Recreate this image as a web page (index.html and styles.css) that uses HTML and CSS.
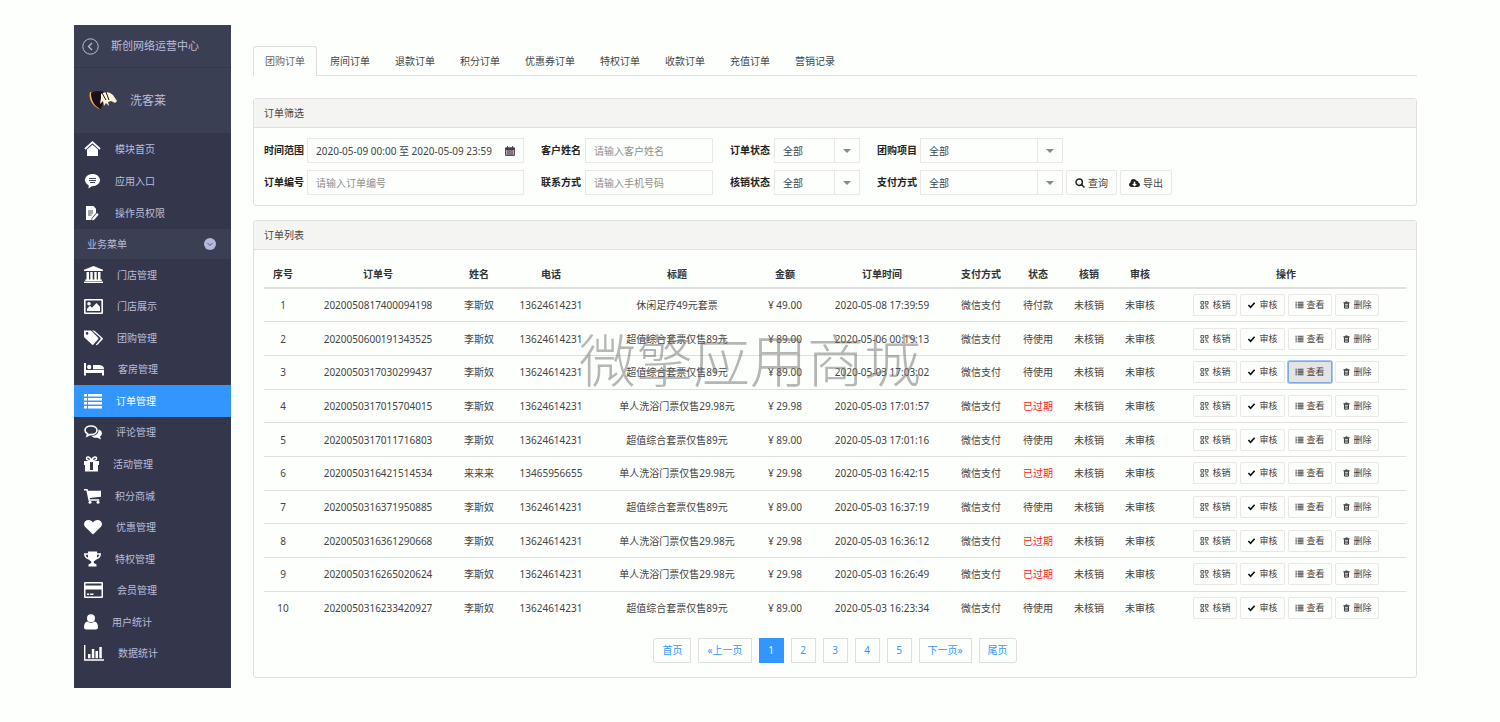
FILE: index.html
```html
<!DOCTYPE html>
<html lang="zh-CN">
<head>
<meta charset="utf-8">
<title>订单管理</title>
<link rel="stylesheet" href="styles.css">
</head>
<body>
<svg class="sprite" aria-hidden="true">
  <symbol id="i-qr" viewBox="0 0 9 9"><path d="M.5.5h3v3h-3zM5.5.5h3v3h-3zM.5 5.5h3v3h-3zM5 5.5h2v1.500h1.500M5.500 8.500h1M8 8.500h1" fill="none" stroke="currentColor"/></symbol>
  <symbol id="i-check" viewBox="0 0 9 9"><path d="M1 4.500 3.500 7 8 2" fill="none" stroke="#111" stroke-width="1.900"/></symbol>
  <symbol id="i-rows" viewBox="0 0 9 9"><path d="M0 1.500h1.500M0 3.500h1.500M0 5.500h1.500M0 7.500h1.500M2.500 1.500H9M2.500 3.500H9M2.500 5.500H9M2.500 7.500H9" stroke="currentColor" stroke-width="1.200"/></symbol>
  <symbol id="i-trash" viewBox="0 0 7 9"><path d="M1.200 2.500h4.600V8H1.200zM0 2h7M2.500 1h2M2.800 4v3M4.300 4v3" fill="none" stroke="#222" stroke-width="1"/></symbol>
</svg>
<div class="page">
  <aside class="side">
    <a class="side-head" href="#"><svg width="17" height="17" viewBox="0 0 17 17"><g fill="none" stroke="currentColor"><circle cx="8.500" cy="8.500" r="7.700"/><path d="M10 5 6.500 8.500 10 12" stroke-width="1.300"/></g></svg>斯创网络运营中心</a>
    <div class="brand"><svg width="29" height="19" viewBox="0 0 29 19"><path d="M1 1C-1 8 4 16 11 18 6 12 4 7 5 2z" fill="#f0b25c"/><path d="M2 2C5-.5 14 0 19 2l3 4-7 3-3 9C6 16 2 10 2 2z" fill="#1d1015"/><path d="M12 3c2-2 7-2 9-1l3 2 4 6-2 2-4-2-3 1 1 4-3-3-2 3-1-5-3 3 1-6z" fill="#fff3d5"/><path d="m13 2 4 7M17 1l3 8" stroke="#241418"/></svg>洗客莱</div>
    <nav class="menu top">
      <a href="#"><svg width="17" height="16" viewBox="0 0 17 16"><path d="M1 8 8.500 1.200 16 8" fill="none" stroke="#fff" stroke-width="1.700"/><path d="M3 8.500 8.500 3.800 14 8.500V15H3z"/></svg>模块首页</a>
      <a href="#"><svg width="17" height="16" viewBox="0 0 17 16"><path d="M8.500 1C4.400 1 1 3.700 1 7.100c0 2.300 1.500 4.200 3.700 5.200L4.500 15.500l3.300-2.300c4.600.2 8.200-2.600 8.200-6.100C16 3.700 12.600 1 8.500 1z"/><path d="M5 5.500h7M5 7.500h7M6 9.500h5" stroke="#44475e"/></svg>应用入口</a>
      <a href="#"><svg width="17" height="16" viewBox="0 0 17 16"><path d="M2 1h7.500L12 3.800V8l-4.500 5.200V15H2z"/><path d="M4 6h5M4 8h5M4 10h3.500" stroke="#44475e"/><path d="m13 8 1.700 1.400-4.500 5.300-2 .8.300-2.200z"/></svg>操作员权限</a>
    </nav>
    <div class="group">业务菜单<svg width="12" height="12" viewBox="0 0 12 12"><circle cx="6" cy="6" r="6" fill="#b4b8da"/><path d="m3.500 5 2.500 2.500L8.500 5" fill="none" stroke="#5a5e7c"/></svg></div>
    <nav class="menu main-menu">
      <a href="#"><svg width="19" height="17" viewBox="0 0 19 17"><path d="M9.500 0 19 3.800V5H0V3.800zM2.500 6H5v7.500h1.300V6h2.400v7.500h1.600V6h2.400v7.500H14V6h2.500v7.500h1.300V15H1.200v-1.500h1.300zM0 15.500h19V17H0z"/></svg>门店管理</a>
      <a href="#"><svg width="19" height="17" viewBox="0 0 19 17"><path fill-rule="evenodd" d="M1.200 1h16.600q1.200 0 1.200 1.200v12.600q0 1.200-1.200 1.200H1.200Q0 16 0 14.800V2.200Q0 1 1.200 1zm.4 1.500v12h15.800v-12z"/><circle cx="5" cy="5.700" r="1.800"/><path d="M3 13v-2.200l3-3 2 2L12.500 5l3.500 3.700V13z"/></svg>门店展示</a>
      <a href="#"><svg width="19" height="17" viewBox="0 0 19 17"><path fill-rule="evenodd" d="M0 1.500h6.200q1 0 1.600.7l6.300 6.600q.7.700 0 1.500L9.500 15.600q-.8.800-1.600 0L.7 8.800Q0 8 0 7.200zm3 1.600a1.300 1.300 0 1 0 .1 2.700A1.300 1.300 0 0 0 3 3.100z"/><path d="M8.200 1.500h1.300q.9 0 1.600.7l7.400 6.700q.8.700 0 1.500l-5 5.400q-.9.800-1.700 0l4.600-5.600q.6-.8 0-1.500z"/></svg>团购管理</a>
      <a href="#"><svg width="20" height="16" viewBox="0 0 20 16"><path d="M0 2h2v7h18v5.500h-2V12H2v2.500H0zM9 4h6.500Q20 4.500 20 8.300H9z"/><circle cx="5.200" cy="6" r="2.200"/></svg>客房管理</a>
      <a class="active" href="#"><svg width="18" height="16" viewBox="0 0 18 16"><path d="M0 1h3v2.500H0zM0 5h3v2.500H0zM0 9h3v2.500H0zM0 13h3v2.500H0zM4 1h14v2.500H4zM4 5h14v2.500H4zM4 9h14v2.500H4zM4 13h14v2.500H4z"/></svg>订单管理</a>
      <a href="#"><svg width="18" height="16" viewBox="0 0 18 16"><path d="M7 2c3.400 0 6 1.900 6 4.300s-2.600 4.300-6 4.300l-1.200-.1L3 12l.6-2.200C2 9 1 7.700 1 6.300 1 3.900 3.600 2 7 2z" fill="none" stroke="#fff" stroke-width="1.600"/><path d="M14.500 5.500C17 6.300 18 7.700 18 9.300c0 1.300-.8 2.500-2 3.300l1 2.900-3.600-1.800c-2.500.3-4.500-.3-5.900-1.800 4.300 0 7.500-2.400 7-6.400z"/></svg>评论管理</a>
      <a href="#"><svg width="15" height="16" viewBox="0 0 15 16"><path d="M7.500 4.500C3 4.500 2.500 3.300 2.500 2.500 2.500 0 6 .5 7.500 4.500 9 .5 12.500 0 12.500 2.500c0 .8-.5 2-5 2z" fill="none" stroke="#fff" stroke-width="1.500"/><path fill-rule="evenodd" d="M0 5h15v4h-1v6.500H1V9H0zm6 1v8h3V6z"/></svg>活动管理</a>
      <a href="#"><svg width="17" height="16" viewBox="0 0 17 16"><path d="M0 1h3.500l.6 1.700H17v6L5.700 10l.3 1.300h9.300v1.400H4.500L2.400 2.500H0z"/><circle cx="6" cy="14.300" r="1.500"/><circle cx="14" cy="14.300" r="1.500"/></svg>积分商城</a>
      <a href="#"><svg width="18" height="16" viewBox="0 0 18 16"><path d="M9 15.500 1.500 8.300C-1.500 5 .5 1 4.500 1 6.500 1 8 2.200 9 3.500 10 2.200 11.500 1 13.500 1c4 0 6 4 3 7.300z"/></svg>优惠管理</a>
      <a href="#"><svg width="17" height="16" viewBox="0 0 17 16"><path d="M4 .5h9V6q0 3-3.200 4.200V12l2.700 1.500v2h-8v-2L7.200 12v-1.800Q4 9 4 6z"/><path d="M4 3H.8q0 4.200 5 5M13 3h3.200q0 4.200-5 5" fill="none" stroke="#fff" stroke-width="1.500"/></svg>特权管理</a>
      <a href="#"><svg width="19" height="16" viewBox="0 0 19 16"><path fill-rule="evenodd" d="M1.200 0h16.600Q19 0 19 1.200v13.600q0 1.200-1.200 1.200H1.200Q0 16 0 14.800V1.200Q0 0 1.200 0zm.3 1.500v2h16v-2zm0 6v7h16v-7zM3 11.500h2.200V13H3zm3.200 0h3.300V13H6.200z"/></svg>会员管理</a>
      <a href="#"><svg width="14" height="16" viewBox="0 0 14 16"><circle cx="7" cy="4.300" r="4"/><path d="M3.300 7.500q3.700 2.800 7.400 0C13 8 14 10.500 14 13q0 2.500-2.500 2.500h-9Q0 15.500 0 13c0-2.500 1-5 3.300-5.500z"/></svg>用户统计</a>
      <a href="#"><svg width="20" height="16" viewBox="0 0 20 16"><path d="M0 0h1.400v14.200H20v1.600H0zM4 9h2.500v4.200H4zM7.800 4h2.500v9.200H7.800zM11.500 6H14v7.200h-2.500zM15.300 2h2.500v11.200h-2.500z"/></svg>数据统计</a>
    </nav>
  </aside>

  <main class="content">
    <nav class="tabs">
      <a class="on" href="#">团购订单</a><a href="#">房间订单</a><a href="#">退款订单</a><a href="#">积分订单</a><a href="#">优惠券订单</a><a href="#">特权订单</a><a href="#">收款订单</a><a href="#">充值订单</a><a href="#">营销记录</a>
    </nav>

    <section class="panel">
      <h2>订单筛选</h2>
      <form class="filters">
        <label for="range">时间范围</label>
        <button class="field range" id="range" type="button">2020-05-09 00:00 至 2020-05-09 23:59<svg width="10" height="10" viewBox="0 0 10 10"><path d="M.5 2h9v7.500h-9zM.5 4h9M.5 6h9M.5 8h9M3 4v5.500M5 4v5.500M7 4v5.500M2.500 0v2.500M7.500 0v2.500" fill="none" stroke="#4d3b4d" stroke-width=".9"/><path d="M.5 1.500h9V4h-9z" fill="#4d3b4d"/></svg></button>
        <label for="name">客户姓名</label>
        <input class="field" id="name" type="text" placeholder="请输入客户姓名">
        <label for="state">订单状态</label>
        <span class="select"><select id="state"><option>全部</option></select></span>
        <label for="item">团购项目</label>
        <span class="select"><select id="item"><option>全部</option></select></span>
        <span class="actions"></span>

        <label for="no">订单编号</label>
        <input class="field" id="no" type="text" placeholder="请输入订单编号">
        <label for="tel">联系方式</label>
        <input class="field" id="tel" type="text" placeholder="请输入手机号码">
        <label for="verify">核销状态</label>
        <span class="select"><select id="verify"><option>全部</option></select></span>
        <label for="pay">支付方式</label>
        <span class="select"><select id="pay"><option>全部</option></select></span>
        <span class="actions">
          <button class="btn" type="button"><svg width="10" height="10" viewBox="0 0 10 10"><g fill="none" stroke="#222" stroke-width="1.500"><circle cx="4.200" cy="4.200" r="3.200"/><path d="m6.500 6.500 3 3"/></g></svg>查询</button>
          <button class="btn" type="button"><svg width="11" height="10" viewBox="0 0 11 10"><path fill="#222" fill-rule="evenodd" d="M2.700 9Q0 8.800 0 6.500 0 5 1.600 4.300 1.700 1 4.600 1q2 0 2.800 1.800 2-.3 2 1.700Q11 5 11 6.700 11 9 8.600 9zM4.700 3.800V6H3l2.500 2.500L8 6H6.300V3.800z"/></svg>导出</button>
        </span>
      </form>
    </section>

    <section class="panel list">
      <h2>订单列表</h2>
      <div class="list-body">
      <table>
        <colgroup><col class="c-idx"><col class="c-no"><col class="c-name"><col class="c-tel"><col class="c-title"><col class="c-sum"><col class="c-time"><col class="c-pay"><col class="c-state"><col class="c-verify"><col class="c-audit"><col class="c-ops"></colgroup>
        <thead><tr><th>序号</th><th>订单号</th><th>姓名</th><th>电话</th><th>标题</th><th>金额</th><th>订单时间</th><th>支付方式</th><th>状态</th><th>核销</th><th>审核</th><th>操作</th></tr></thead>
        <tbody>
          <tr><td>1</td><td>2020050817400094198</td><td>李斯奴</td><td>13624614231</td><td>休闲足疗49元套票</td><td>¥ 49.00</td><td>2020-05-08 17:39:59</td><td>微信支付</td><td>待付款</td><td>未核销</td><td>未审核</td><td><div class="ops"><button type="button"><svg><use href="#i-qr"/></svg>核销</button><button type="button"><svg><use href="#i-check"/></svg>审核</button><button type="button"><svg><use href="#i-rows"/></svg>查看</button><button type="button"><svg><use href="#i-trash"/></svg>删除</button></div></td></tr>
          <tr><td>2</td><td>2020050600191343525</td><td>李斯奴</td><td>13624614231</td><td>超值综合套票仅售89元</td><td>¥ 89.00</td><td>2020-05-06 00:19:13</td><td>微信支付</td><td>待使用</td><td>未核销</td><td>未审核</td><td><div class="ops"><button type="button"><svg><use href="#i-qr"/></svg>核销</button><button type="button"><svg><use href="#i-check"/></svg>审核</button><button type="button"><svg><use href="#i-rows"/></svg>查看</button><button type="button"><svg><use href="#i-trash"/></svg>删除</button></div></td></tr>
          <tr><td>3</td><td>2020050317030299437</td><td>李斯奴</td><td>13624614231</td><td>超值综合套票仅售89元</td><td>¥ 89.00</td><td>2020-05-03 17:03:02</td><td>微信支付</td><td>待使用</td><td>未核销</td><td>未审核</td><td><div class="ops"><button type="button"><svg><use href="#i-qr"/></svg>核销</button><button type="button"><svg><use href="#i-check"/></svg>审核</button><button class="focused" type="button"><svg><use href="#i-rows"/></svg>查看</button><button type="button"><svg><use href="#i-trash"/></svg>删除</button></div></td></tr>
          <tr><td>4</td><td>2020050317015704015</td><td>李斯奴</td><td>13624614231</td><td>单人洗浴门票仅售29.98元</td><td>¥ 29.98</td><td>2020-05-03 17:01:57</td><td>微信支付</td><td class="expired">已过期</td><td>未核销</td><td>未审核</td><td><div class="ops"><button type="button"><svg><use href="#i-qr"/></svg>核销</button><button type="button"><svg><use href="#i-check"/></svg>审核</button><button type="button"><svg><use href="#i-rows"/></svg>查看</button><button type="button"><svg><use href="#i-trash"/></svg>删除</button></div></td></tr>
          <tr><td>5</td><td>2020050317011716803</td><td>李斯奴</td><td>13624614231</td><td>超值综合套票仅售89元</td><td>¥ 89.00</td><td>2020-05-03 17:01:16</td><td>微信支付</td><td>待使用</td><td>未核销</td><td>未审核</td><td><div class="ops"><button type="button"><svg><use href="#i-qr"/></svg>核销</button><button type="button"><svg><use href="#i-check"/></svg>审核</button><button type="button"><svg><use href="#i-rows"/></svg>查看</button><button type="button"><svg><use href="#i-trash"/></svg>删除</button></div></td></tr>
          <tr><td>6</td><td>2020050316421514534</td><td>来来来</td><td>13465956655</td><td>单人洗浴门票仅售29.98元</td><td>¥ 29.98</td><td>2020-05-03 16:42:15</td><td>微信支付</td><td class="expired">已过期</td><td>未核销</td><td>未审核</td><td><div class="ops"><button type="button"><svg><use href="#i-qr"/></svg>核销</button><button type="button"><svg><use href="#i-check"/></svg>审核</button><button type="button"><svg><use href="#i-rows"/></svg>查看</button><button type="button"><svg><use href="#i-trash"/></svg>删除</button></div></td></tr>
          <tr><td>7</td><td>2020050316371950885</td><td>李斯奴</td><td>13624614231</td><td>超值综合套票仅售89元</td><td>¥ 89.00</td><td>2020-05-03 16:37:19</td><td>微信支付</td><td>待使用</td><td>未核销</td><td>未审核</td><td><div class="ops"><button type="button"><svg><use href="#i-qr"/></svg>核销</button><button type="button"><svg><use href="#i-check"/></svg>审核</button><button type="button"><svg><use href="#i-rows"/></svg>查看</button><button type="button"><svg><use href="#i-trash"/></svg>删除</button></div></td></tr>
          <tr><td>8</td><td>2020050316361290668</td><td>李斯奴</td><td>13624614231</td><td>单人洗浴门票仅售29.98元</td><td>¥ 29.98</td><td>2020-05-03 16:36:12</td><td>微信支付</td><td class="expired">已过期</td><td>未核销</td><td>未审核</td><td><div class="ops"><button type="button"><svg><use href="#i-qr"/></svg>核销</button><button type="button"><svg><use href="#i-check"/></svg>审核</button><button type="button"><svg><use href="#i-rows"/></svg>查看</button><button type="button"><svg><use href="#i-trash"/></svg>删除</button></div></td></tr>
          <tr><td>9</td><td>2020050316265020624</td><td>李斯奴</td><td>13624614231</td><td>单人洗浴门票仅售29.98元</td><td>¥ 29.98</td><td>2020-05-03 16:26:49</td><td>微信支付</td><td class="expired">已过期</td><td>未核销</td><td>未审核</td><td><div class="ops"><button type="button"><svg><use href="#i-qr"/></svg>核销</button><button type="button"><svg><use href="#i-check"/></svg>审核</button><button type="button"><svg><use href="#i-rows"/></svg>查看</button><button type="button"><svg><use href="#i-trash"/></svg>删除</button></div></td></tr>
          <tr><td>10</td><td>2020050316233420927</td><td>李斯奴</td><td>13624614231</td><td>超值综合套票仅售89元</td><td>¥ 89.00</td><td>2020-05-03 16:23:34</td><td>微信支付</td><td>待使用</td><td>未核销</td><td>未审核</td><td><div class="ops"><button type="button"><svg><use href="#i-qr"/></svg>核销</button><button type="button"><svg><use href="#i-check"/></svg>审核</button><button type="button"><svg><use href="#i-rows"/></svg>查看</button><button type="button"><svg><use href="#i-trash"/></svg>删除</button></div></td></tr>
        </tbody>
      </table>
      <nav class="pager"><a href="#">首页</a><a href="#">«上一页</a><a class="on" href="#">1</a><a href="#">2</a><a href="#">3</a><a href="#">4</a><a href="#">5</a><a href="#">下一页»</a><a href="#">尾页</a></nav>
      </div>
    </section>
  </main>
  <div class="watermark">微擎应用商城</div>
</div>
</body>
</html>
```
FILE: styles.css
```css
* { box-sizing: border-box; }
body {
  margin: 0;
  background: #fdfffc;
  color: #444;
  font: 10px/16px "Noto Sans", "Noto Sans CJK SC", sans-serif;
}
a { color: inherit; text-decoration: none; }
button, input, select { font: inherit; color: inherit; background: transparent; margin: 0; }
.sprite { display: none; }

.page {
  position: relative;
  display: flex;
  gap: 22px;
  padding: 25px 83px 33px 74px;
}

/* sidebar */
.side {
  display: flex;
  flex-direction: column;
  flex: 0 0 157px;
  background: #34374b;
  color: #b9bedb;
}
.side-head, .brand { display: flex; align-items: center; background: #3b3f54; }
.side-head { height: 43px; padding-left: 8px; gap: 12px; font-size: 11px; border-bottom: 1px solid #34384c; }
.brand { height: 65px; padding-left: 15px; gap: 12px; font-size: 12px; }
.menu { display: grid; grid-auto-rows: 1fr; }
.menu a { display: flex; align-items: center; gap: 14px; padding-left: 10px; min-height: 31px; }
.menu svg { fill: #fff; }
.top { flex: 0 0 96px; }
.main-menu { flex: 1; padding-bottom: 19px; }
.menu .active { background: #3396ff; color: #fff; }
.group {
  display: flex;
  align-items: center;
  justify-content: space-between;
  height: 30px;
  padding: 0 15px 0 13px;
  background: #3b3f54;
}

/* content */
.content { flex: 1; min-width: 0; padding: 21px 0 10px; }
.tabs { display: flex; gap: 1px; border-bottom: 1px solid #e0dede; margin-bottom: 22px; }
.tabs a { padding: 6px 11px; border: 1px solid transparent; border-bottom: 0; }
.tabs .on {
  color: #666;
  border-color: #e0dede;
  border-radius: 3px 3px 0 0;
  background: #fdfffc;
  margin-bottom: -1px;
  padding-bottom: 7px;
}
.panel { border: 1px solid #e0dede; border-radius: 3px; margin-bottom: 14px; }
.panel h2 {
  margin: 0;
  padding: 6px 10px;
  font-size: 10px;
  font-weight: 400;
  background: #f4f4f2;
  border-bottom: 1px solid #e0dede;
}
.list { margin-bottom: 0; }

.filters {
  display: grid;
  grid-template-columns: 43px 217px 61px 128px 61px 86px 60px 143px 1fr;
  row-gap: 7px;
  padding: 10px;
}
.filters label { font-weight: 700; color: #222; line-height: 25px; }
.filters label:not(:first-child) { padding-left: 17px; }
.filters label[for="no"] { padding-left: 0; }
.field { height: 25px; width: 100%; border: 1px solid #ebe7e7; padding: 0 8px; text-align: left; outline: 0; }
.field::placeholder { color: #8f8f8f; opacity: 1; }
.range { display: flex; align-items: center; justify-content: space-between; white-space: nowrap; }
.select { position: relative; display: block; height: 25px; border: 1px solid #ebe7e7; }
.select select { width: 100%; height: 23px; border: 0; padding: 0 8px; appearance: none; outline: 0; }
.select::before { content: ""; position: absolute; right: 24px; top: 0; bottom: 0; border-left: 1px solid #ebe7e7; pointer-events: none; }
.select::after { content: ""; position: absolute; right: 8px; top: 10px; border: 4px solid transparent; border-top-color: #888; border-bottom: 0; pointer-events: none; }
.actions { display: flex; gap: 3px; padding-left: 3px; }
.btn { display: flex; align-items: center; gap: 3px; height: 25px; padding: 0 8px; border: 1px solid #ebe7e7; border-radius: 2px; }

/* order table */
.list-body { padding: 10px 10px 14px; }
table { width: 100%; height: 365px; table-layout: fixed; border-collapse: collapse; text-align: center; }
.c-idx { width: 38px; }
.c-no { width: 152px; }
.c-name { width: 50px; }
.c-tel { width: 94px; }
.c-title { width: 158px; }
.c-sum { width: 58px; }
.c-time { width: 136px; }
.c-pay { width: 62px; }
.c-state { width: 52px; }
.c-verify { width: 50px; }
.c-audit { width: 52px; }
.c-ops { width: 240px; }
th { height: 28px; padding: 0; color: #333; font-weight: 700; border-bottom: 2px solid #e0dede; }
td { height: 33px; padding: 0; white-space: nowrap; border-top: 1px solid #e0dede; }
.expired { color: #f22; }
.ops { display: flex; justify-content: center; gap: 3px; }
.ops button {
  display: flex;
  align-items: center;
  gap: 3px;
  height: 22px;
  padding: 0 6px;
  border: 1px solid #ebe7e7;
  border-radius: 2px;
  font-size: 9px;
}
.ops svg { width: 9px; height: 8px; }
.ops .focused { background: #e4e4e4; border-color: #7fa9e6; box-shadow: 0 0 0 1px #a9c6f2; }

.pager { display: flex; justify-content: center; gap: 7px; margin-top: 13px; color: #3396ff; }
.pager a { min-width: 25px; padding: 4px 8px; line-height: 15px; text-align: center; border: 1px solid #e0dede; }
.pager .on { background: #3396ff; border-color: #3396ff; color: #fff; }
.pager a:first-child { border-radius: 3px 0 0 3px; }
.pager a:last-child { border-radius: 0 3px 3px 0; }

.watermark {
  position: absolute;
  left: 50%;
  top: 50%;
  transform: translate(-50%, -50%);
  padding-bottom: 8px;
  font: 300 57px/58px "Noto Sans CJK SC", sans-serif;
  color: rgba(110, 110, 110, .5);
  white-space: nowrap;
  pointer-events: none;
}
```
